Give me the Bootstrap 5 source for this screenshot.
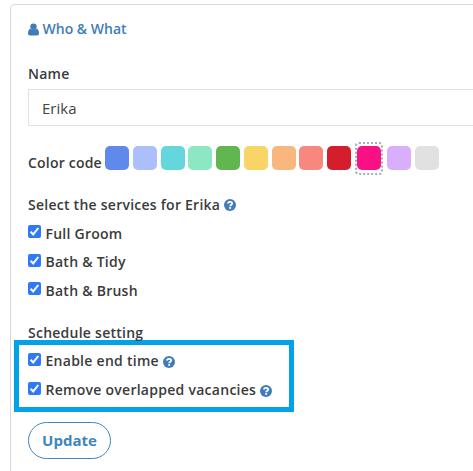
<!DOCTYPE html>
<html lang="en">
<head>
<meta charset="utf-8">
<meta name="viewport" content="width=device-width, initial-scale=1">
<title>Who &amp; What</title>
<link href="https://cdn.jsdelivr.net/npm/bootstrap@5.3.0/dist/css/bootstrap.min.css" rel="stylesheet">
<style>
body{font:600 14px/20px "Open Sans",sans-serif;color:#3b3b3b;background:#fff}
.panel{height:100vh;padding:4px 0 0 10px}
.panel-body{height:100%;padding:14px 0 0 17px;border:1px solid #d9d9d9;border-width:1px 0 0 1px;border-radius:5px 0 0 0;color:#3b3b3b}
.panel-title{color:#417cb8;gap:3.5px;height:20px;margin-bottom:25px;font-weight:600}
.strong-text{font-weight:600;letter-spacing:.25px}
.name-label{height:20px;margin-bottom:5px}
.name-input{height:37px;border:1px solid #e2e2e2;border-right:0;border-radius:0;padding:0 13px;font:400 15px/35px "Open Sans",sans-serif;color:#444;margin-bottom:15px}
.color-row{height:34px;margin-bottom:20px}
.color-row .strong-text{width:77px;padding-top:9px;letter-spacing:.2px}
.swatches{gap:3.75px}
.swatch{width:24px;height:24px;border-radius:5px}
.picked{padding:2.5px 0;border:2px dotted #a9a9bd;border-radius:4px;margin:0 .25px}
.help{width:12px;height:12px;margin-left:4px;flex:none}
.check-row{height:28.5px;padding-top:1px}
.check-row .form-check-input{width:13px;height:13px;margin:0 4.5px 4.4px 0;border-radius:2px;flex:none}
.check-row .form-check-input:checked{background-color:#2f78f6;border:0;background-size:13px;background-image:url("data:image/svg+xml,%3Csvg xmlns='http://www.w3.org/2000/svg' viewBox='0 0 13 13'%3E%3Cpath d='M2.600 6.800 5.200 9.400 10.300 3' fill='none' stroke='white' stroke-width='2'/%3E%3C/svg%3E")}
.services{margin-top:4px;margin-bottom:18px}
.highlight{width:280px;height:72px;margin:-3px 0 10px -14px;border:5px solid #00a2e8;padding:2px 0 0 9px;background:#fff}
.highlight .strong-text{letter-spacing:.27px}
.highlight .check-row .form-check-input{margin-bottom:3px}
.highlight .help{margin-top:2px}
.update{width:83px;height:37px;border:1px solid #3c86c0;color:#3c86c0;font:700 15px/35px "Open Sans",sans-serif;letter-spacing:0;padding:0}
</style>
</head>
<body>
<svg width="0" height="0" class="d-none"><symbol id="help" viewBox="0 0 12 12"><circle cx="6" cy="6" r="6" fill="#417cb8"/><path d="M3.800 4.500C4.100 3.300 4.900 2.800 6 2.800c1.300 0 2.200.7 2.200 1.700C8.200 5.800 6.200 5.600 6.200 7.300" fill="none" stroke="#fff" stroke-width="1.800"/><path d="M5.200 8.100h1.900v1.700H5.200z" fill="#fff"/></symbol></svg>
<form class="panel">
 <div class="panel-body">
  <div class="panel-title d-flex align-items-center">
    <svg width="11" height="13" viewBox="0 0 11 13" fill="currentColor"><circle cx="5.5" cy="3.700" r="3.200"/><path d="M2.300 5.700C.7 6.200 0 8 0 10.300 0 11.700.8 12.500 2 12.500h7c1.200 0 2-.8 2-2.200 0-2.300-.7-4.100-2.300-4.600C7.900 6.400 6.800 6.800 5.500 6.800S3.100 6.400 2.300 5.700z"/></svg>
    <span>Who &amp; What</span>
  </div>
  <label class="name-label strong-text d-block" for="name">Name</label>
  <input id="name" class="name-input form-control" value="Erika">
  <div class="color-row d-flex align-items-center">
    <span class="strong-text flex-shrink-0">Color code</span>
    <div class="swatches d-flex align-items-center">
      <span class="swatch" style="background:#5f8aec"></span>
      <span class="swatch" style="background:#aabffb"></span>
      <span class="swatch" style="background:#63d7dc"></span>
      <span class="swatch" style="background:#8be8c2"></span>
      <span class="swatch" style="background:#61b650"></span>
      <span class="swatch" style="background:#f8d566"></span>
      <span class="swatch" style="background:#f9b77d"></span>
      <span class="swatch" style="background:#f68880"></span>
      <span class="swatch" style="background:#d51e2b"></span>
      <span class="picked d-flex"><span class="swatch" style="background:#f81184"></span></span>
      <span class="swatch" style="background:#d9aefc"></span>
      <span class="swatch" style="background:#e1e1e1"></span>
    </div>
  </div>
  <div class="strong-text d-flex align-items-center">Select the services for Erika<svg class="help"><use href="#help"/></svg></div>
  <div class="services">
    <label class="check-row strong-text d-flex align-items-center"><input class="form-check-input" type="checkbox" checked>Full Groom</label>
    <label class="check-row strong-text d-flex align-items-center"><input class="form-check-input" type="checkbox" checked>Bath &amp; Tidy</label>
    <label class="check-row strong-text d-flex align-items-center"><input class="form-check-input" type="checkbox" checked>Bath &amp; Brush</label>
  </div>
  <div class="strong-text">Schedule setting</div>
  <div class="highlight">
    <label class="check-row strong-text d-flex align-items-center"><input class="form-check-input" type="checkbox" checked>Enable end time<svg class="help"><use href="#help"/></svg></label>
    <label class="check-row strong-text d-flex align-items-center"><input class="form-check-input" type="checkbox" checked>Remove overlapped vacancies<svg class="help"><use href="#help"/></svg></label>
  </div>
  <button type="button" class="update btn rounded-pill">Update</button>
 </div>
</form>
<script src="https://cdn.jsdelivr.net/npm/bootstrap@5.3.0/dist/js/bootstrap.bundle.min.js"></script>
</body>
</html>
